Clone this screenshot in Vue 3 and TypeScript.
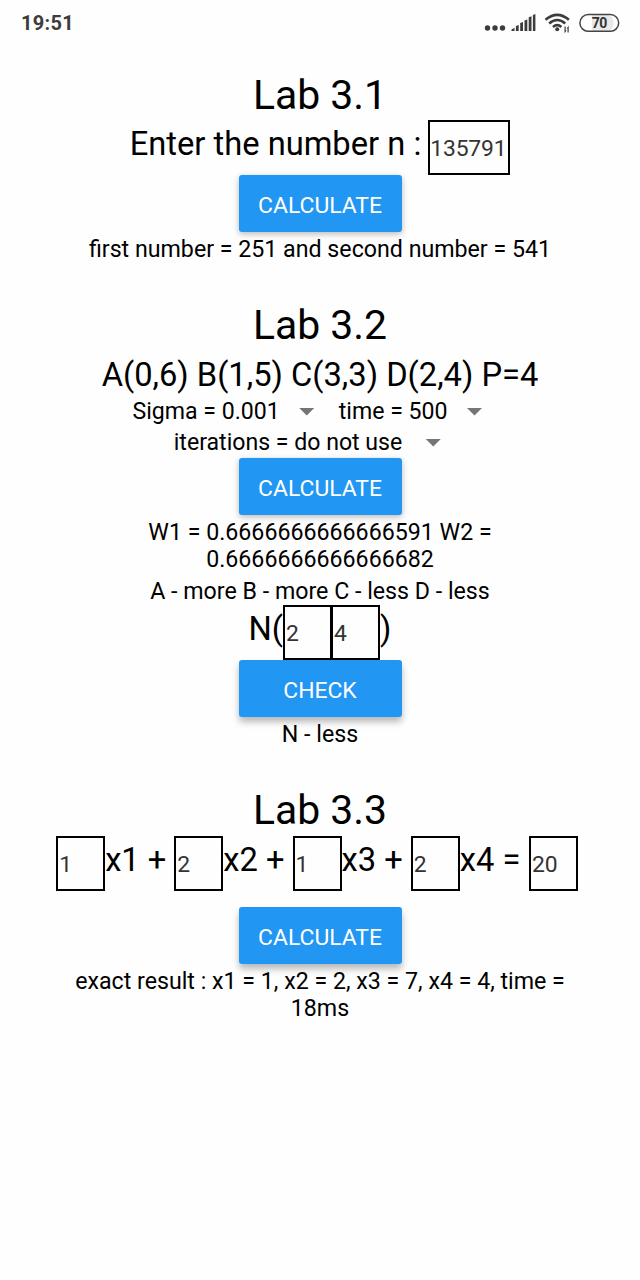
<script setup lang="ts">
import { ref } from 'vue'

const n = ref('135791')
const point = ref(['2', '4'])
const total = ref('20')
const terms = ref([
  { value: '1', label: 'x1 +' },
  { value: '2', label: 'x2 +' },
  { value: '1', label: 'x3 +' },
  { value: '2', label: 'x4 =' },
])
</script>

<template>
  <div class="screen">
    <header class="status">
      <span class="clock">19:51</span>
      <svg class="indicators" width="139" height="26" viewBox="0 0 139 26">
        <g fill="#3c3c3c">
          <circle cx="6.500" cy="18" r="2.700" />
          <circle cx="14" cy="18" r="2.700" />
          <circle cx="21.500" cy="18" r="2.700" />
          <path d="M30.500 21v-1.500l3-1.700V21zM34.900 21v-5l2.800-1v6zM39.200 21v-8l2.800-1v9zM43.500 21V10.400l2.800-1V21zM47.700 21V7.200l2.800-1V21zM51.900 21V5l2.500-1.100V21z" />
          <circle cx="76.200" cy="19.300" r="2" />
          <path d="M83.500 16.500h1.200v4h1l-2.200 2.800zM87.700 22.500h-1.200v-4h-.9l2.100-2.700z" />
        </g>
        <g fill="none" stroke="#3c3c3c" stroke-width="2.600">
          <path d="M64.500 9.700Q76.200 0 87.900 9.700" />
          <path d="M68.200 13.400Q76.200 6.600 84.200 13.400" />
          <path d="M72 16.900Q76.200 13.300 80.400 16.900" />
        </g>
        <path d="M111 5h15.500q6 1 6 8t-6 8H111z" fill="#e8e8e8" />
        <rect x="98.900" y="4.600" width="38.800" height="16.700" rx="8.350" fill="none" stroke="#444" stroke-width="1.500" />
        <text x="118.300" y="17.700" text-anchor="middle" class="battery">70</text>
      </svg>
    </header>

    <section class="lab first">
      <h1>Lab 3.1</h1>
      <div class="field-row number">
        <span class="big">Enter the number n :</span>
        <input v-model="n" class="box wide" />
      </div>
      <button class="action">CALCULATE</button>
      <p class="result one">first number = 251 and second number = 541</p>
    </section>

    <section class="lab second">
      <h1>Lab 3.2</h1>
      <p class="points">A(0,6) B(1,5) C(3,3) D(2,4) P=4</p>
      <div class="pickers">
        <span class="picker sigma">Sigma = 0.001<i class="caret"></i></span>
        <span class="picker">time = 500<i class="caret"></i></span>
      </div>
      <div class="pickers lower">
        <span class="picker iter">iterations = do not use<i class="caret"></i></span>
      </div>
      <button class="action">CALCULATE</button>
      <p class="result weights">W1 = 0.6666666666666591 W2 =<br />0.6666666666666682</p>
      <p class="result compare">A - more B - more C - less D - less</p>
      <div class="field-row check">
        <span class="big">N(</span>
        <input v-for="(_, i) in point" :key="i" v-model="point[i]" class="box" />
        <span class="big">)</span>
      </div>
      <button class="action raised">CHECK</button>
      <p class="result verdict">N - less</p>
    </section>

    <section class="lab third">
      <h1>Lab 3.3</h1>
      <div class="field-row equation">
        <label v-for="term in terms" :key="term.label" class="term">
          <input v-model="term.value" class="box" />
          <span class="big">{{ term.label }}</span>
        </label>
        <input v-model="total" class="box" />
      </div>
      <button class="action raised">CALCULATE</button>
      <p class="result exact">exact result : x1 = 1, x2 = 2, x3 = 7, x4 = 4, time =<br />18ms</p>
    </section>
  </div>
</template>

<style>
html,
body {
  margin: 0;
  background: #fefefe;
}
</style>

<style scoped>
.screen {
  width: 640px;
  height: 1280px;
  overflow: hidden;
  background: #fefefe;
  color: #000;
  font-family: Roboto, sans-serif;
  font-size: 23.1px;
}
.status {
  display: flex;
  justify-content: space-between;
  align-items: flex-start;
  height: 72px;
  box-sizing: border-box;
  padding: 10px 20px 0 21px;
}
.clock {
  color: #3c3c3c;
  font-size: 20px;
  font-weight: 700;
  line-height: 26px;
  letter-spacing: 0.3px;
}
.indicators {
  display: block;
}
.battery {
  fill: #333;
  font: 700 14px Roboto, sans-serif;
  letter-spacing: -0.4px;
}
.lab {
  display: flex;
  flex-direction: column;
  align-items: center;
}
h1 {
  margin: 0;
  padding-bottom: 2px;
  font-size: 40.9px;
  font-weight: 400;
  line-height: 46px;
  white-space: nowrap;
}
.big,
.points {
  font-size: 32.7px;
  line-height: 48px;
  white-space: pre;
}
.field-row {
  display: flex;
  align-items: flex-start;
  height: 55px;
}
.box {
  width: 49px;
  height: 55px;
  box-sizing: border-box;
  flex: none;
  margin: 0;
  padding: 2px 0 0 1px;
  border: 2px solid #000;
  border-radius: 0;
  outline: none;
  background: transparent;
  color: #333;
  font: 400 22.9px Roboto, sans-serif;
}
.wide {
  width: 82px;
  margin-left: 7px;
  padding-left: 0;
  letter-spacing: -0.2px;
}
.action {
  width: 163px;
  height: 57px;
  flex: none;
  margin: 0;
  padding: 3px 0 0;
  border: 0;
  border-radius: 3px;
  background: #2196f3;
  box-shadow: 0 2px 6px rgba(0, 0, 0, 0.28);
  color: #fff;
  font: 400 22.9px Roboto, sans-serif;
}
.raised {
  box-shadow: 0 5px 7px rgba(0, 0, 0, 0.28);
}
.result {
  margin: 0;
  font-size: 23.2px;
  line-height: 27px;
  text-align: center;
  white-space: nowrap;
}
.one {
  padding: 4px 0 0;
}
.second {
  padding-top: 39px;
}
.points {
  margin: 0;
  padding-top: 1px;
}
.pickers {
  display: flex;
  height: 31px;
  line-height: 31px;
  margin-top: -3px;
  padding-right: 25px;
}
.lower {
  margin-top: 0;
}
.picker {
  display: flex;
  align-items: center;
  white-space: nowrap;
}
.caret {
  width: 16px;
  height: 8px;
  margin-left: 19px;
  background: #757575;
  clip-path: polygon(0 0, 100% 0, 50% 100%);
}
.sigma {
  margin-right: 24px;
}
.iter .caret {
  margin-left: 23px;
}
.weights {
  padding-top: 4px;
}
.compare {
  padding-top: 5px;
}
.check .box + .box {
  margin-left: -1px;
}
.verdict {
  padding-top: 4px;
}
.third {
  padding-top: 39px;
}
.equation {
  height: 71px;
  margin-top: 1px;
  margin-right: 6px;
}
.term {
  display: flex;
  width: 118.2px;
}
.exact {
  padding-top: 4px;
}
</style>
